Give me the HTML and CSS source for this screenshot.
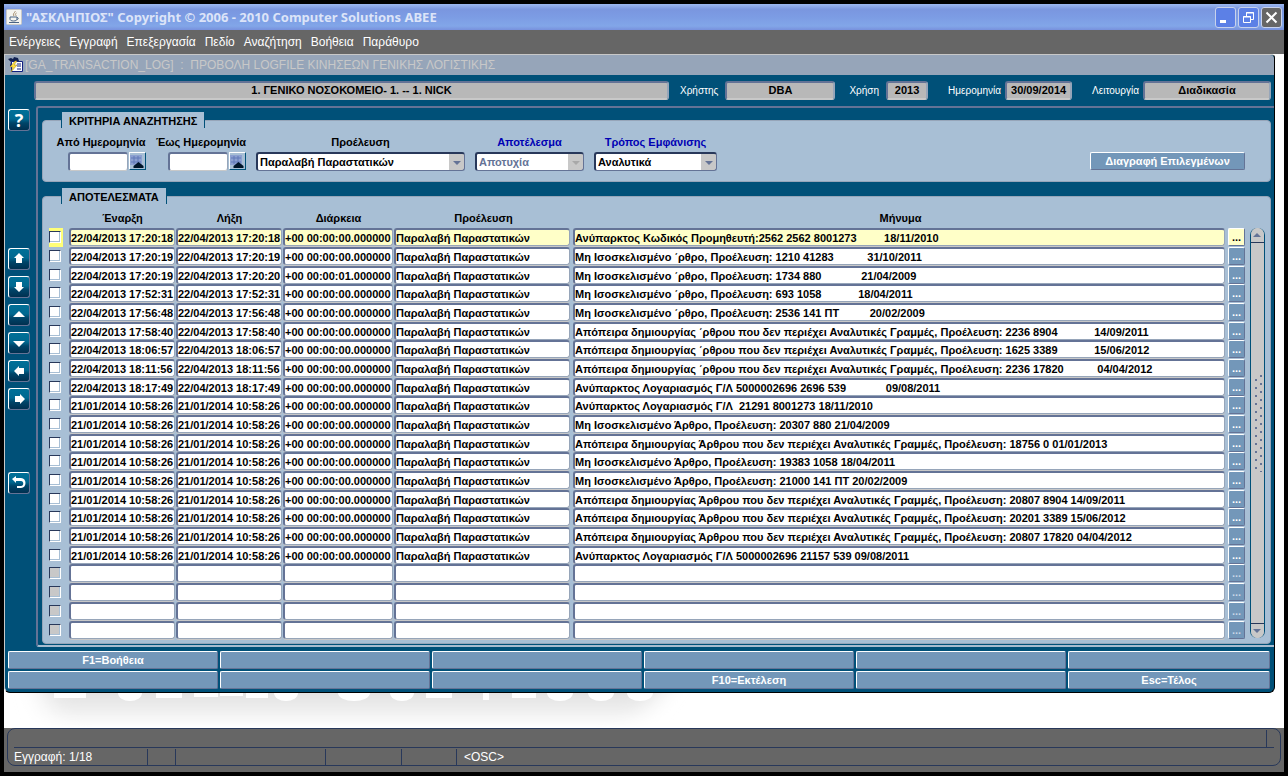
FILE: index.html
```
<!DOCTYPE html>
<html lang="el">
<head>
    <meta charset="UTF-8">
    <meta name="viewport" content="width=device-width, initial-scale=1.0">
    <title>ΑΣΚΛΗΠΙΟΣ</title>
    <link rel="stylesheet" href="styles.css">
</head>
<body>
    <header class="titlebar">
        <svg class="java-icon" width="16" height="16" viewBox="0 0 16 16">
            <rect x="0.5" y="0.5" width="15" height="15" rx="1" fill="#f4f4f0" stroke="#c8c8c8"/>
            <path d="M9 2c1 1-3 2.500-1 5M10.500 4c-2 1-1 2 0 3" fill="none" stroke="#a08868"/>
            <path d="M4 8h7v2c0 1-1 2-3.500 2S4 11 4 10zM11 8.500c2 0 1.500 2-.5 2.500" fill="none" stroke="#4a6484"/>
            <path d="M3 13.500h10" stroke="#4a6484"/>
        </svg>
        <h1>"ΑΣΚΛΗΠΙΟΣ" Copyright © 2006 - 2010 Computer Solutions ABEE</h1>
        <div class="window-buttons">
            <button aria-label="Minimize"><svg width="19" height="19"><path d="M4 12h6v3H4z" fill="#fff"/></svg></button>
            <button aria-label="Restore"><svg width="19" height="19"><path d="M7.500 8V4.500h7v7H12M7 5h8M4.500 8.500h7v6h-7zM4 9h8" fill="none" stroke="#fff"/></svg></button>
            <button class="close" aria-label="Close"><svg width="19" height="19"><path d="M4.500 4.500l10 10M14.500 4.500l-10 10" stroke="#fff" stroke-width="2"/></svg></button>
        </div>
    </header>
    <nav class="menubar">
        <a href="#">Ενέργειες</a>
        <a href="#">Εγγραφή</a>
        <a href="#">Επεξεργασία</a>
        <a href="#">Πεδίο</a>
        <a href="#">Αναζήτηση</a>
        <a href="#">Βοήθεια</a>
        <a href="#">Παράθυρο</a>
    </nav>

    <main class="desktop">
        <div class="form-window">
            <div class="form-title">
                <svg width="18" height="18" viewBox="0 0 18 18">
                    <path d="M1 3l3-1 2 1 1-2 4 1 1 3H8l-2 3-1 3-2-1 1-4z" fill="#102050"/>
                    <path d="M4.500 5.500h11v10h-11z" fill="#fff" stroke="#102080"/>
                    <path d="M10 8h4M10 10h4M10 13h4" stroke="#102080"/>
                    <path d="M8 5l-5 6h3l-2 5 6-7H7l3-4z" fill="#ffe040" stroke="#a08020" stroke-width=".5"/>
                </svg>
                <h2>[GA_TRANSACTION_LOG] &nbsp;: &nbsp;ΠΡΟΒΟΛΗ LOGFILE ΚΙΝΗΣΕΩΝ ΓΕΝΙΚΗΣ ΛΟΓΙΣΤΙΚΗΣ</h2>
            </div>

            <div class="info">
                <output class="info-box company">1. ΓΕΝΙΚΟ ΝΟΣΟΚΟΜΕΙΟ- 1. -- 1. NICK</output>
                <span>Χρήστης</span>
                <output class="info-box user">DBA</output>
                <span>Χρήση</span>
                <output class="info-box year">2013</output>
                <span>Ημερομηνία</span>
                <output class="info-box date">30/09/2014</output>
                <span>Λειτουργία</span>
                <output class="info-box mode">Διαδικασία</output>
            </div>

            <div class="work">
                <div class="toolbar">
                    <button class="help" aria-label="Βοήθεια">?</button>
                    <button aria-label="Προηγούμενη"><svg width="20" height="20"><path d="M10 4l5 5h-2v5H7V9H5z"/></svg></button>
                    <button aria-label="Επόμενη"><svg width="20" height="20"><path d="M10 15l5-5h-2V5H7v5H5z"/></svg></button>
                    <button aria-label="Σελίδα πάνω"><svg width="20" height="20"><path d="M10 6l6 6H4z"/></svg></button>
                    <button aria-label="Σελίδα κάτω"><svg width="20" height="20"><path d="M10 14l6-6H4z"/></svg></button>
                    <button aria-label="Αριστερά"><svg width="20" height="20"><path d="M5 10l5-5v2h5v6h-5v2z"/></svg></button>
                    <button aria-label="Δεξιά"><svg width="20" height="20"><path d="M16 10l-5-5v2H6v6h5v2z"/></svg></button>
                    <button class="back" aria-label="Επιστροφή"><svg width="20" height="20"><path d="M3 6l4-3v2h5c6 0 6 10 0 10H8v-2h4c3 0 3-5 0-5H7v2z"/></svg></button>
                </div>

                <div class="canvas">
                    <section class="panel criteria">
                        <h3>ΚΡΙΤΗΡΙΑ ΑΝΑΖΗΤΗΣΗΣ</h3>
                        <div class="field">
                            <label for="from">Από Ημερομηνία</label>
                            <div class="date-field">
                                <input type="text" id="from">
                                <button aria-label="Ημερολόγιο"><svg width="14" height="15"><path d="M0 1h12v10H0z" fill="#8ca0d0"/><path d="M1 4h10M1 8h10M4 2v8M8 2v8" stroke="#6078b8"/><path d="M8.500 8l5 4v2h-10v-2z" fill="#001428"/></svg></button>
                            </div>
                        </div>
                        <div class="field">
                            <label for="to">Έως Ημερομηνία</label>
                            <div class="date-field">
                                <input type="text" id="to">
                                <button aria-label="Ημερολόγιο"><svg width="14" height="15"><path d="M0 1h12v10H0z" fill="#8ca0d0"/><path d="M1 4h10M1 8h10M4 2v8M8 2v8" stroke="#6078b8"/><path d="M8.500 8l5 4v2h-10v-2z" fill="#001428"/></svg></button>
                            </div>
                        </div>
                        <div class="field origin">
                            <label for="origin">Προέλευση</label>
                            <div class="select"><select id="origin"><option>Παραλαβή Παραστατικών</option></select></div>
                        </div>
                        <div class="field outcome">
                            <label for="outcome">Αποτέλεσμα</label>
                            <div class="select"><select id="outcome" disabled><option>Αποτυχία</option></select></div>
                        </div>
                        <div class="field display">
                            <label for="display">Τρόπος Εμφάνισης</label>
                            <div class="select"><select id="display"><option>Αναλυτικά</option></select></div>
                        </div>
                        <button class="btn delete">Διαγραφή Επιλεγμένων</button>
                    </section>

                    <section class="panel results">
                        <h3>ΑΠΟΤΕΛΕΣΜΑΤΑ</h3>
                        <table>
                            <colgroup>
                                <col class="col-check">
                                <col class="col-start">
                                <col class="col-end">
                                <col class="col-duration">
                                <col class="col-origin">
                                <col>
                                <col class="col-more">
                            </colgroup>
                            <thead>
                                <tr>
                                    <td></td>
                                    <th>Έναρξη</th>
                                    <th>Λήξη</th>
                                    <th>Διάρκεια</th>
                                    <th>Προέλευση</th>
                                    <th>Μήνυμα</th>
                                    <td></td>
                                </tr>
                            </thead>
                            <tbody id="rows"></tbody>
                        </table>
                        <div class="scrollbar">
                            <button class="up" aria-label="Πάνω"><svg width="13" height="12"><path d="M6 4l4 4H2z"/></svg></button>
                            <div class="grip"></div>
                            <button class="down" aria-label="Κάτω"><svg width="13" height="12"><path d="M6 8l4-4H2z"/></svg></button>
                        </div>
                    </section>
                </div>
            </div>

            <div class="keys">
                <button class="btn">F1=Βοήθεια</button>
                <button class="btn"></button>
                <button class="btn"></button>
                <button class="btn"></button>
                <button class="btn"></button>
                <button class="btn"></button>
                <button class="btn"></button>
                <button class="btn"></button>
                <button class="btn"></button>
                <button class="btn">F10=Εκτέλεση</button>
                <button class="btn"></button>
                <button class="btn">Esc=Τέλος</button>
            </div>
        </div>

        <svg class="watermark" width="720" height="35" viewBox="0 0 720 35">
            <defs>
                <linearGradient id="fade" x1="0" y1="0" x2="0" y2="1">
                    <stop offset="0" stop-color="#e2e2e2"/>
                    <stop offset="0.4" stop-color="#ececec"/>
                    <stop offset="1" stop-color="#fff"/>
                </linearGradient>
                <filter id="soft" x="-10%" width="120%"><feGaussianBlur stdDeviation="14 0"/></filter>
            </defs>
            <path d="M40 0H655L630 35H50z" fill="url(#fade)" filter="url(#soft)"/>
            <g fill="#fff">
                <path d="M50 0h32v5H50zM152 0h26v5h-26zM190 0h24v4h-24zM216 0h23v3h-23zM242 0h22v5h-22zM422 0h26v5h-26zM479 0h6v7h-6zM508 0h24v5h-24z"/>
                <ellipse cx="126" cy="0" rx="12" ry="8"/>
                <ellipse cx="282" cy="0" rx="12" ry="8"/>
                <ellipse cx="350" cy="0" rx="16" ry="8"/>
                <ellipse cx="398" cy="0" rx="12" ry="8"/>
                <ellipse cx="556" cy="0" rx="13" ry="8"/>
                <ellipse cx="597" cy="0" rx="13" ry="8"/>
                <ellipse cx="636" cy="0" rx="13" ry="8"/>
            </g>
        </svg>
    </main>

    <footer class="status">
        <div class="status-frame">
            <div class="status-message"></div>
            <div class="status-line">
                <span class="record">Εγγραφή: 1/18</span>
                <span class="flag"></span>
                <span class="mode-cell"></span>
                <span class="lov"></span>
                <span class="enter"></span>
                <span class="osc">&lt;OSC&gt;</span>
            </div>
        </div>
    </footer>

    <script>
        const origin = "Παραλαβή Παραστατικών";
        const day1 = "22/04/2013 ";
        const day2 = "21/01/2014 10:58:26";
        const zero = "+00 00:00:00.000000";

        const rows = [
            [day1 + "17:20:18", day1 + "17:20:18", zero, "Ανύπαρκτος Κωδικός Προμηθευτή:2562 2562 8001273         18/11/2010"],
            [day1 + "17:20:19", day1 + "17:20:19", zero, "Μη Ισοσκελισμένο ΄ρθρο, Προέλευση: 1210 41283           31/10/2011"],
            [day1 + "17:20:19", day1 + "17:20:20", "+00 00:00:01.000000", "Μη Ισοσκελισμένο ΄ρθρο, Προέλευση: 1734 880             21/04/2009"],
            [day1 + "17:52:31", day1 + "17:52:31", zero, "Μη Ισοσκελισμένο ΄ρθρο, Προέλευση: 693 1058            18/04/2011"],
            [day1 + "17:56:48", day1 + "17:56:48", zero, "Μη Ισοσκελισμένο ΄ρθρο, Προέλευση: 2536 141 ΠΤ          20/02/2009"],
            [day1 + "17:58:40", day1 + "17:58:40", zero, "Απόπειρα δημιουργίας ΄ρθρου που δεν περιέχει Αναλυτικές Γραμμές, Προέλευση: 2236 8904            14/09/2011"],
            [day1 + "18:06:57", day1 + "18:06:57", zero, "Απόπειρα δημιουργίας ΄ρθρου που δεν περιέχει Αναλυτικές Γραμμές, Προέλευση: 1625 3389            15/06/2012"],
            [day1 + "18:11:56", day1 + "18:11:56", zero, "Απόπειρα δημιουργίας ΄ρθρου που δεν περιέχει Αναλυτικές Γραμμές, Προέλευση: 2236 17820           04/04/2012"],
            [day1 + "18:17:49", day1 + "18:17:49", zero, "Ανύπαρκτος Λογαριασμός Γ/Λ 5000002696 2696 539             09/08/2011"],
            [day2, day2, zero, "Ανύπαρκτος Λογαριασμός Γ/Λ  21291 8001273 18/11/2010"],
            [day2, day2, zero, "Μη Ισοσκελισμένο Άρθρο, Προέλευση: 20307 880 21/04/2009"],
            [day2, day2, zero, "Απόπειρα δημιουργίας Άρθρου που δεν περιέχει Αναλυτικές Γραμμές, Προέλευση: 18756 0 01/01/2013"],
            [day2, day2, zero, "Μη Ισοσκελισμένο Άρθρο, Προέλευση: 19383 1058 18/04/2011"],
            [day2, day2, zero, "Μη Ισοσκελισμένο Άρθρο, Προέλευση: 21000 141 ΠΤ 20/02/2009"],
            [day2, day2, zero, "Απόπειρα δημιουργίας Άρθρου που δεν περιέχει Αναλυτικές Γραμμές, Προέλευση: 20807 8904 14/09/2011"],
            [day2, day2, zero, "Απόπειρα δημιουργίας Άρθρου που δεν περιέχει Αναλυτικές Γραμμές, Προέλευση: 20201 3389 15/06/2012"],
            [day2, day2, zero, "Απόπειρα δημιουργίας Άρθρου που δεν περιέχει Αναλυτικές Γραμμές, Προέλευση: 20807 17820 04/04/2012"],
            [day2, day2, zero, "Ανύπαρκτος Λογαριασμός Γ/Λ 5000002696 21157 539 09/08/2011"]
        ];
        const visibleRows = 22;
        const tbody = document.getElementById('rows');

        for (let i = 0; i < visibleRows; i++) {
            const row = rows[i];
            const tr = document.createElement('tr');
            if (i === 0) tr.className = 'current';
            if (!row) tr.className = 'empty';

            const off = row ? '' : 'disabled';
            const cells = row ? [row[0], row[1], row[2], origin, row[3]] : ['', '', '', '', ''];
            tr.innerHTML = `<td class="check"><input type="checkbox" aria-label="Επιλογή ${i + 1}" ${off}></td>`
                + cells.map(text => `<td><div class="cell">${text}</div></td>`).join('')
                + `<td><button class="btn more" ${off}>...</button></td>`;
            tbody.appendChild(tr);
        }
    </script>
</body>
</html>
```
FILE: styles.css
```
* {
    box-sizing: border-box;
}
body {
    margin: 0;
    padding: 4px;
    min-height: 100vh;
    display: flex;
    flex-direction: column;
    background: #000;
    color: #000;
    font-family: "Liberation Sans", Arial, sans-serif;
    font-size: 11px;
    line-height: 14px;
}
h1, h2, h3 {
    margin: 0;
    font-size: inherit;
}
button, input, select {
    margin: 0;
    padding: 0;
    font: inherit;
    border-radius: 0;
}
svg {
    display: block;
}

/* Title bar and menu */
.titlebar {
    display: flex;
    align-items: center;
    height: 26px;
    padding: 0 2px;
    background: linear-gradient(#9cb8f0, #7a96df 20%, #7c9ce4 50%, #82a6e8 85%, #7890dc);
}
.titlebar h1 {
    flex: 1;
    margin-left: 4px;
    font-family: "Noto Sans", sans-serif;
    font-size: 13px;
    color: #dce4f8;
}
.window-buttons {
    display: flex;
    gap: 2px;
}
.window-buttons button {
    width: 21px;
    height: 21px;
    border: 1px solid #c8d2ec;
    border-radius: 3px;
    background: #5c80e6;
}
.window-buttons .close {
    background: #666;
}
.menubar {
    display: flex;
    align-items: center;
    gap: 9px;
    height: 24px;
    padding-left: 5px;
    background: #666;
    font-size: 12px;
}
.menubar a {
    color: #fff;
    text-decoration: none;
}

/* Forms window */
.desktop {
    flex: 1;
    display: flex;
    flex-direction: column;
    background: #fff;
}
.form-window {
    margin-right: 9px;
    border: 1px solid #000;
    border-color: #c8c8c8 #000 #000 #c8c8c8;
    border-radius: 0 4px 6px 6px;
    background: #005078;
}
.form-title {
    display: flex;
    align-items: center;
    height: 20px;
    padding-left: 2px;
    background: #96a5b9;
    border-radius: 0 4px 0 0;
}
.form-title h2 {
    font-size: 12px;
    font-weight: normal;
    color: #c8c8c8;
}
.info {
    display: flex;
    align-items: center;
    height: 31px;
    padding: 0 3px 0 29px;
    color: #fff;
    font-size: 10px;
}
.info span {
    margin: 0 7px 0 11px;
}
.info-box {
    height: 19px;
    border: 2px solid #647396;
    border-right-color: #96a5b9;
    border-bottom-color: #c8c8c8;
    border-radius: 3px;
    background: #b8b8b8;
    color: #000;
    font-size: 11px;
    font-weight: bold;
    text-align: center;
}
.company {
    flex: 1;
}
.user {
    width: 110px;
}
.year {
    width: 42px;
}
.date {
    width: 67px;
}
.mode {
    width: 128px;
}
.info .user + span {
    margin-left: 14px;
}
.info .year + span,
.info .date + span {
    margin-left: 20px;
    margin-right: 4px;
}
.work {
    display: flex;
}

/* Navigation buttons */
.toolbar {
    display: flex;
    flex-direction: column;
    gap: 6px;
    width: 31px;
    padding: 3px 0 0 3px;
}
.toolbar button {
    width: 22px;
    height: 22px;
    border: 1px solid #647396;
    border-top-color: #fff;
    border-left-color: #fff;
    border-radius: 3px;
    background: linear-gradient(#007098, #006890 45%, #004468 65%, #003050);
    color: #fff;
}
.toolbar path {
    fill: #fff;
}
.toolbar .help {
    margin-bottom: 111px;
    font-family: "Open Sans", sans-serif;
    font-size: 18px;
    font-weight: bold;
    line-height: 20px;
}
.toolbar .back {
    margin-top: 56px;
}

/* Content canvas */
.canvas {
    flex: 1;
    display: flex;
    flex-direction: column;
    gap: 14px;
    padding: 12px 3px 1px 4px;
    border: 2px solid #647396;
    border-right: 0;
    border-bottom-color: #a8bcd0;
    border-radius: 3px 0 0 3px;
}
.panel {
    position: relative;
    border: 1px solid #96a5b9;
    border-radius: 4px;
    background: #a8bfd5;
}
.panel h3 {
    position: absolute;
    top: -9px;
    left: 18px;
    height: 16px;
    padding: 2px 7px 0;
    border: 1px solid #005078;
    border-width: 0 1px;
    background: #a8bfd5;
}
.criteria {
    display: flex;
    align-items: flex-start;
    gap: 10px;
    height: 62px;
    padding: 14px 25px 0 13px;
}
.field {
    display: flex;
    flex-direction: column;
    align-items: center;
    gap: 3px;
    width: 90px;
    font-weight: bold;
}
.field label {
    white-space: nowrap;
}
.date-field {
    display: flex;
    gap: 1px;
    align-self: flex-end;
}
.date-field input {
    width: 60px;
    height: 19px;
    border: 2px solid #647396;
    border-right: 1px solid #96a5b9;
    border-bottom: 1px solid #c8c8c8;
    border-radius: 3px;
    background: #fff;
}
.date-field button {
    width: 17px;
    height: 18px;
    border: 1px solid #005078;
    border-top-color: #fff;
    border-left-color: #fff;
    background: #a8bfd5;
}
.origin {
    width: 209px;
}
.outcome {
    width: 109px;
}
.display {
    width: 123px;
}
.outcome label,
.display label {
    color: #0000b4;
}
.select {
    position: relative;
    width: 100%;
}
.select select {
    display: block;
    width: 100%;
    height: 19px;
    padding-left: 2px;
    appearance: none;
    border: 1px solid #647396;
    border-top: 2px solid #28385a;
    border-left: 2px solid #28385a;
    border-radius: 3px;
    background: linear-gradient(to left, #c8c8c8 15px, #fff 15px);
    color: #000;
}
.select select:disabled {
    opacity: 1;
    color: #647396;
}
.select::after {
    content: "";
    position: absolute;
    top: 9px;
    right: 4px;
    border: 4px solid transparent;
    border-top-color: #647396;
    border-bottom: 0;
}
.outcome .select::after {
    border-top-color: #a8a8a8;
}
.btn {
    border: 1px solid #647396;
    border-top-color: #fff;
    border-left-color: #fff;
    border-radius: 2px;
    background: #7397b9;
    color: #fff;
    font-weight: bold;
    text-align: center;
}
.delete {
    width: 155px;
    height: 18px;
    margin-top: 17px;
    margin-left: auto;
}

/* Results grid */
.results {
    display: flex;
    gap: 5px;
    padding: 12px 5px 4px 6px;
}
table {
    flex: 1;
    width: 100%;
    height: 430px;
    table-layout: fixed;
    border-collapse: collapse;
    font-weight: bold;
}
td, th {
    padding: 0;
}
th {
    padding-bottom: 2px;
}
thead tr {
    height: 19px;
}
.col-check {
    width: 20px;
}
.col-start {
    width: 107px;
}
.col-end {
    width: 107px;
}
.col-duration {
    width: 111px;
}
.col-origin {
    width: 179px;
}
.col-more {
    width: 17px;
}
.cell {
    height: 18px;
    margin-right: 1px;
    overflow: hidden;
    border: 2px solid #647396;
    border-right: 1px solid #96a5b9;
    border-bottom: 1px solid #96a5b9;
    border-radius: 3px;
    box-shadow: 0 1px #c8c8c8;
    background: #fff;
    line-height: 17px;
    white-space: pre;
}
td:nth-child(5) .cell,
td:nth-child(6) .cell {
    margin-right: 3px;
}
.current .cell {
    background: #ffffc8;
}
.check input {
    display: block;
    width: 12px;
    height: 12px;
    appearance: none;
    border: 1px solid #fff;
    border-top-color: #28385a;
    border-left-color: #28385a;
    background: #fff;
    box-shadow: inset -1px -1px #a8bfd5;
}
.current .check {
    background: linear-gradient(to right, #ffff78 14px, transparent 14px);
}
.empty .check input {
    background: #c8c8c8;
}
.more {
    display: block;
    width: 17px;
    height: 18px;
    line-height: 12px;
}
.current .more {
    background: #ffffc8;
    color: #000;
}
.more:disabled {
    color: #c8d6e6;
}
.scrollbar {
    display: flex;
    flex-direction: column;
    justify-content: space-between;
    align-items: center;
    width: 15px;
    margin: 19px 0 1px;
    border: 1px solid #005078;
    border-width: 0 1px;
    border-radius: 7px;
    background: #c8c8c8;
}
.scrollbar button {
    width: 13px;
    height: 15px;
    border: 0;
    border-bottom: 1px solid #28385a;
    border-radius: 7px 7px 0 0;
    background: #c8c8c8;
}
.scrollbar .down {
    border-top: 1px solid #28385a;
    border-bottom: 0;
    border-radius: 0 0 7px 7px;
}
.scrollbar path {
    fill: #647396;
}
.grip {
    width: 8px;
    height: 98px;
    margin-bottom: 20px;
    background: radial-gradient(circle at 2px 6px, #647396 1px, transparent 1px), radial-gradient(circle at 7px 2px, #647396 1px, transparent 1px);
    background-size: 8px 8px;
}

/* Function keys */
.keys {
    display: grid;
    grid-template-columns: repeat(5, 210fr) 202fr;
    gap: 2px;
    padding: 4px 4px 3px 3px;
}
.keys .btn {
    height: 18px;
}

/* Status bar */
.status {
    height: 44px;
    padding: 0 3px;
    background: #666;
    color: #fff;
    font-size: 12px;
}
.status-frame {
    height: 38px;
    padding: 0 6px;
    border: 1px solid #28385a;
    border-radius: 8px;
}
.status-message {
    height: 19px;
    border-bottom: 1px solid #28385a;
    background: linear-gradient(#28385a, #28385a) right 7px top 1px / 1px 17px no-repeat;
}
.status-line {
    display: flex;
    height: 16px;
    margin-top: 1px;
    line-height: 16px;
}
.status-line span {
    border-right: 1px solid #28385a;
}
.record {
    width: 134px;
}
.flag {
    width: 28px;
}
.mode-cell {
    width: 150px;
}
.lov {
    width: 76px;
}
.enter {
    width: 55px;
}
.status-line .osc {
    padding-left: 7px;
    border: 0;
}
```
